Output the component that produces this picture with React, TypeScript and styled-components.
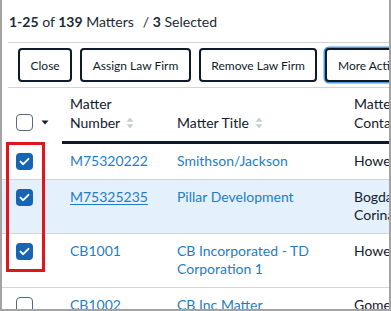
import React from "react";
import styled, { createGlobalStyle } from "styled-components";

const Global = createGlobalStyle`
  html, body { margin: 0; padding: 0; background: #fff; }
  body { font-family: Lato, "Open Sans", sans-serif; color: #13202e; }
`;

const Frame = styled.div`
  width: 391px;
  height: 311px;
  box-sizing: border-box;
  border: 2px solid #a3a3a3;
  border-top: none;
  overflow: hidden;
  position: relative;
  background: #fff;
`;

const Summary = styled.div`
  height: 42px;
  display: flex;
  align-items: center;
  padding-left: 1px;
  margin-left: 6px;
  font-size: 14px;
  color: #1d2a36;
  border-bottom: 1px solid #d4d4d4;
  white-space: nowrap;
  b { font-weight: 700; }
  span.sep { margin-left: 9px; }
`;

const Toolbar = styled.div`
  display: flex;
  gap: 8px;
  padding: 5px 0 5px 10px;
  margin-left: 6px;
  border-bottom: 1px solid #d4d4d4;
  white-space: nowrap;
`;

const Button = styled.button<{ $focus?: boolean }>`
  flex: none;
  height: 34px;
  box-sizing: border-box;
  padding: 0 10.5px;
  background: #fff;
  border: 2px solid #0d1b2a;
  border-radius: 4px;
  font-family: Lato, sans-serif;
  font-size: 12px;
  color: #0d1b2a;
  box-shadow: ${(p) => (p.$focus ? "0 0 0 1.5px #4d9be0" : "none")};
`;

const Table = styled.div`
  width: 520px;
`;

const Row = styled.div<{ $head?: boolean; $selected?: boolean }>`
  display: grid;
  grid-template-columns: 60px 107px 177px 176px;
  align-items: ${(p) => (p.$head ? "end" : "start")};
  background: ${(p) => (p.$selected ? "#e4f0fb" : "transparent")};
  border-bottom: ${(p) => (p.$head ? "none" : "1px solid #d6d6d6")};
`;

const HeadCell = styled.div<{ $first?: boolean }>`
  padding: 6px 8px 9px;
  font-size: 14px;
  font-weight: 400;
  line-height: 19px;
  color: #13202e;
  border-bottom: ${(p) => (p.$first ? "3px solid transparent" : "3px solid #0d1b2a")};
  align-self: stretch;
  display: flex;
  align-items: flex-end;
  white-space: nowrap;
  ${(p) => (p.$first ? "padding-left: 14px; padding-bottom: 10px;" : "")}
`;

const Cell = styled.div<{ $first?: boolean }>`
  padding: ${(p) => (p.$first ? "8px 8px 9px 14px" : "8px 8px 9px")};
  font-size: 14px;
  line-height: 18px;
  color: #13202e;
`;

const Link = styled.a<{ $underline?: boolean }>`
  color: #1f7dc6;
  text-decoration: ${(p) => (p.$underline ? "underline" : "none")};
  text-underline-offset: 2px;
`;

const Box = styled.span<{ $checked?: boolean }>`
  display: inline-flex;
  align-items: center;
  justify-content: center;
  width: 17px;
  height: 17px;
  box-sizing: border-box;
  border-radius: 4px;
  background: ${(p) => (p.$checked ? "#1664b4" : "#fff")};
  border: ${(p) => (p.$checked ? "none" : "1.5px solid #566b7d")};
`;

const CheckWrap = styled.div`
  display: flex;
  align-items: center;
  gap: 8px;
  height: 18px;
`;

const Overlay = styled.div`
  position: absolute;
  left: 4px;
  top: 142px;
  width: 39px;
  height: 130px;
  box-sizing: border-box;
  border: 3px solid #e1141b;
  pointer-events: none;
`;

const Check = () => (
  <svg width="11" height="9" viewBox="0 0 11 9">
    <path d="M1.5 4.6 L4.2 7.2 L9.5 1.8" stroke="#fff" strokeWidth="1.9" fill="none" strokeLinecap="round" strokeLinejoin="round" />
  </svg>
);

const Checkbox = ({ checked }: { checked?: boolean }) => (
  <Box $checked={checked}>{checked && <Check />}</Box>
);

const Sort = () => (
  <svg width="8" height="12" viewBox="0 0 8 12" style={{ marginLeft: 6, marginBottom: -1 }}>
    <path d="M4 0.5 L7.5 4.8 H0.5 Z" fill="#c9cdd2" />
    <path d="M4 11.5 L7.5 7.2 H0.5 Z" fill="#c9cdd2" />
  </svg>
);

const Caret = () => (
  <svg width="8" height="5" viewBox="0 0 8 5">
    <path d="M0.5 0.5 H7.5 L4 4.5 Z" fill="#13202e" />
  </svg>
);

const rows = [
  { num: "M75320222", title: ["Smithson/Jackson"], contact: ["Howel"], checked: true },
  { num: "M75325235", title: ["Pillar Development"], contact: ["Bogda", "Corina"], checked: true, selected: true, underline: true },
  { num: "CB1001", title: ["CB Incorporated - TD", "Corporation 1"], contact: ["Howel"], checked: true },
  { num: "CB1002", title: ["CB Inc Matter"], contact: ["Gomez"], checked: false },
];

const Lines = ({ items }: { items: string[] }) => (
  <>
    {items.map((t, i) => (
      <React.Fragment key={i}>
        {i > 0 && <br />}
        {t}
      </React.Fragment>
    ))}
  </>
);

export default function App() {
  return (
    <>
      <Global />
      <Frame>
        <Summary>
          <span>
            <b>1-25</b> of <b>139</b> Matters
          </span>
          <span className="sep">
            / <b>3</b> Selected
          </span>
        </Summary>
        <Toolbar>
          <Button>Close</Button>
          <Button>Assign Law Firm</Button>
          <Button>Remove Law Firm</Button>
          <Button $focus>More Actions</Button>
        </Toolbar>
        <Table>
          <Row $head>
            <HeadCell $first>
              <CheckWrap>
                <Checkbox />
                <Caret />
              </CheckWrap>
            </HeadCell>
            <HeadCell>
              <span>
                Matter
                <br />
                Number
                <Sort />
              </span>
            </HeadCell>
            <HeadCell>
              <span>
                Matter Title
                <Sort />
              </span>
            </HeadCell>
            <HeadCell>
              <span>
                Matter
                <br />
                Contact
              </span>
            </HeadCell>
          </Row>
          {rows.map((r) => (
            <Row key={r.num} $selected={r.selected}>
              <Cell $first>
                <CheckWrap>
                  <Checkbox checked={r.checked} />
                </CheckWrap>
              </Cell>
              <Cell>
                <Link $underline={r.underline}>{r.num}</Link>
              </Cell>
              <Cell>
                <Link>
                  <Lines items={r.title} />
                </Link>
              </Cell>
              <Cell>
                <Lines items={r.contact} />
              </Cell>
            </Row>
          ))}
        </Table>
        <Overlay />
      </Frame>
    </>
  );
}
